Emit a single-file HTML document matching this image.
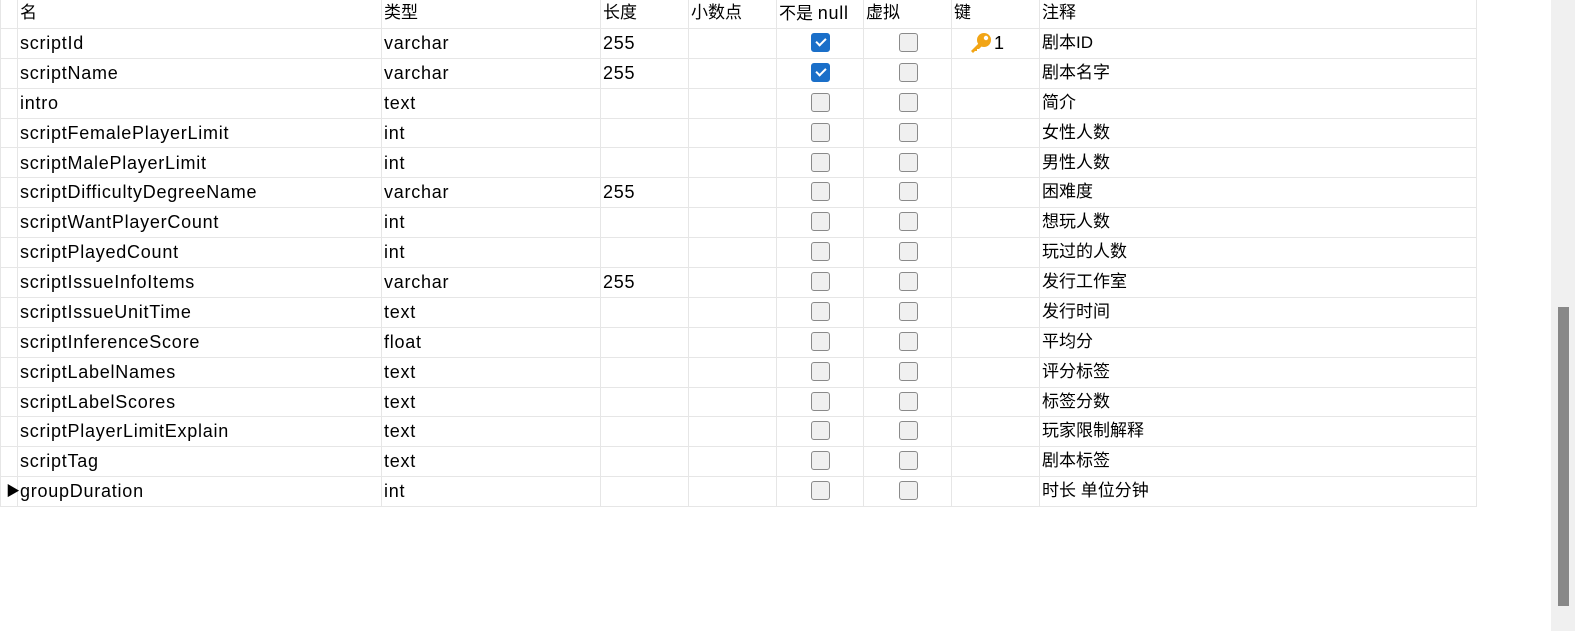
<!DOCTYPE html><html><head><meta charset="utf-8"><style>
body{margin:0;width:1575px;height:631px;background:#fff;overflow:hidden;position:relative;font-family:"Liberation Sans","Noto Sans CJK SC",sans-serif;font-size:17px;color:#000}
.v{position:absolute;top:0;width:1px;height:507px;background:#e6e6e6}
.hl{position:absolute;left:0;width:1477px;height:1px;background:#e6e6e6}
.r{position:absolute;left:0;height:30px;line-height:30px;width:1477px}
.r span{position:absolute;white-space:nowrap}
.r span.l{font-size:18px;letter-spacing:0.75px}
.cb{position:absolute;width:19px;height:19px;border:1px solid #8a8a8a;border-radius:3px;background:#f0f0f0;box-sizing:border-box;top:5px}
.ck{background:#1a6fc9;border-color:#1a6fc9}
.ck:after{content:"";position:absolute;left:4px;top:4px;width:8px;height:4px;border-left:2px solid #fff;border-bottom:2px solid #fff;transform:rotate(-45deg)}
.sb{position:absolute;left:1551px;top:0;width:24px;height:631px;background:#f0f0f0}
.th{position:absolute;left:1558px;top:307px;width:11px;height:299px;background:#888}
</style></head><body>
<div class="v" style="left:0"></div><div class="v" style="left:17px"></div><div class="v" style="left:381px"></div><div class="v" style="left:600px"></div><div class="v" style="left:688px"></div><div class="v" style="left:776px"></div><div class="v" style="left:863px"></div><div class="v" style="left:951px"></div><div class="v" style="left:1039px"></div><div class="v" style="left:1476px"></div>
<div class="hl" style="top:28px"></div><div class="hl" style="top:58px"></div><div class="hl" style="top:88px"></div><div class="hl" style="top:118px"></div><div class="hl" style="top:147px"></div><div class="hl" style="top:177px"></div><div class="hl" style="top:207px"></div><div class="hl" style="top:237px"></div><div class="hl" style="top:267px"></div><div class="hl" style="top:297px"></div><div class="hl" style="top:327px"></div><div class="hl" style="top:357px"></div><div class="hl" style="top:387px"></div><div class="hl" style="top:416px"></div><div class="hl" style="top:446px"></div><div class="hl" style="top:476px"></div><div class="hl" style="top:506px"></div>
<div class="r" style="top:-1px;height:28px;line-height:28px"><span style="left:20px">名</span><span style="left:384px">类型</span><span style="left:603px">长度</span><span style="left:691px">小数点</span><span style="left:779px">不是 <span class="l" style="position:static">null</span></span><span style="left:866px">虚拟</span><span style="left:954px">键</span><span style="left:1042px">注释</span></div>
<div id="rows"></div>
<script>
var d=[["scriptId","varchar","255",1,"剧本ID"],["scriptName","varchar","255",1,"剧本名字"],["intro","text","",0,"简介"],["scriptFemalePlayerLimit","int","",0,"女性人数"],["scriptMalePlayerLimit","int","",0,"男性人数"],["scriptDifficultyDegreeName","varchar","255",0,"困难度"],["scriptWantPlayerCount","int","",0,"想玩人数"],["scriptPlayedCount","int","",0,"玩过的人数"],["scriptIssueInfoItems","varchar","255",0,"发行工作室"],["scriptIssueUnitTime","text","",0,"发行时间"],["scriptInferenceScore","float","",0,"平均分"],["scriptLabelNames","text","",0,"评分标签"],["scriptLabelScores","text","",0,"标签分数"],["scriptPlayerLimitExplain","text","",0,"玩家限制解释"],["scriptTag","text","",0,"剧本标签"],["groupDuration","int","",0,"时长 单位分钟"]];
var h="";d.forEach(function(r,i){var t=Math.round(28+i*29.875);
h+='<div class="r" style="top:'+t+'px">'+(i==15?'<span style="left:6px;font-size:14px">&#9654;</span>':'')+'<span class="l" style="left:20px">'+r[0]+'</span><span class="l" style="left:384px">'+r[1]+'</span><span class="l" style="left:603px">'+r[2]+'</span><div class="cb'+(r[3]?' ck':'')+'" style="left:811px"></div><div class="cb" style="left:899px"></div>'+(i==0?'<span style="left:969px;top:4px;line-height:0"><svg width="24" height="22" viewBox="0 0 24 22"><circle cx="15" cy="8" r="7" fill="#f2a516"/><circle cx="17" cy="6" r="2.2" fill="#fff"/><path d="M10 11 L2 19 L4 21 L6 19 L8 19 L8 17 L10 17 L13 14Z" fill="#f2a516"/></svg></span><span class="l" style="left:994px">1</span>':'')+'<span style="left:1042px">'+r[4]+'</span></div>';});
document.getElementById("rows").innerHTML=h;
</script>
<div class="sb"></div><div class="th"></div>
</body></html>
